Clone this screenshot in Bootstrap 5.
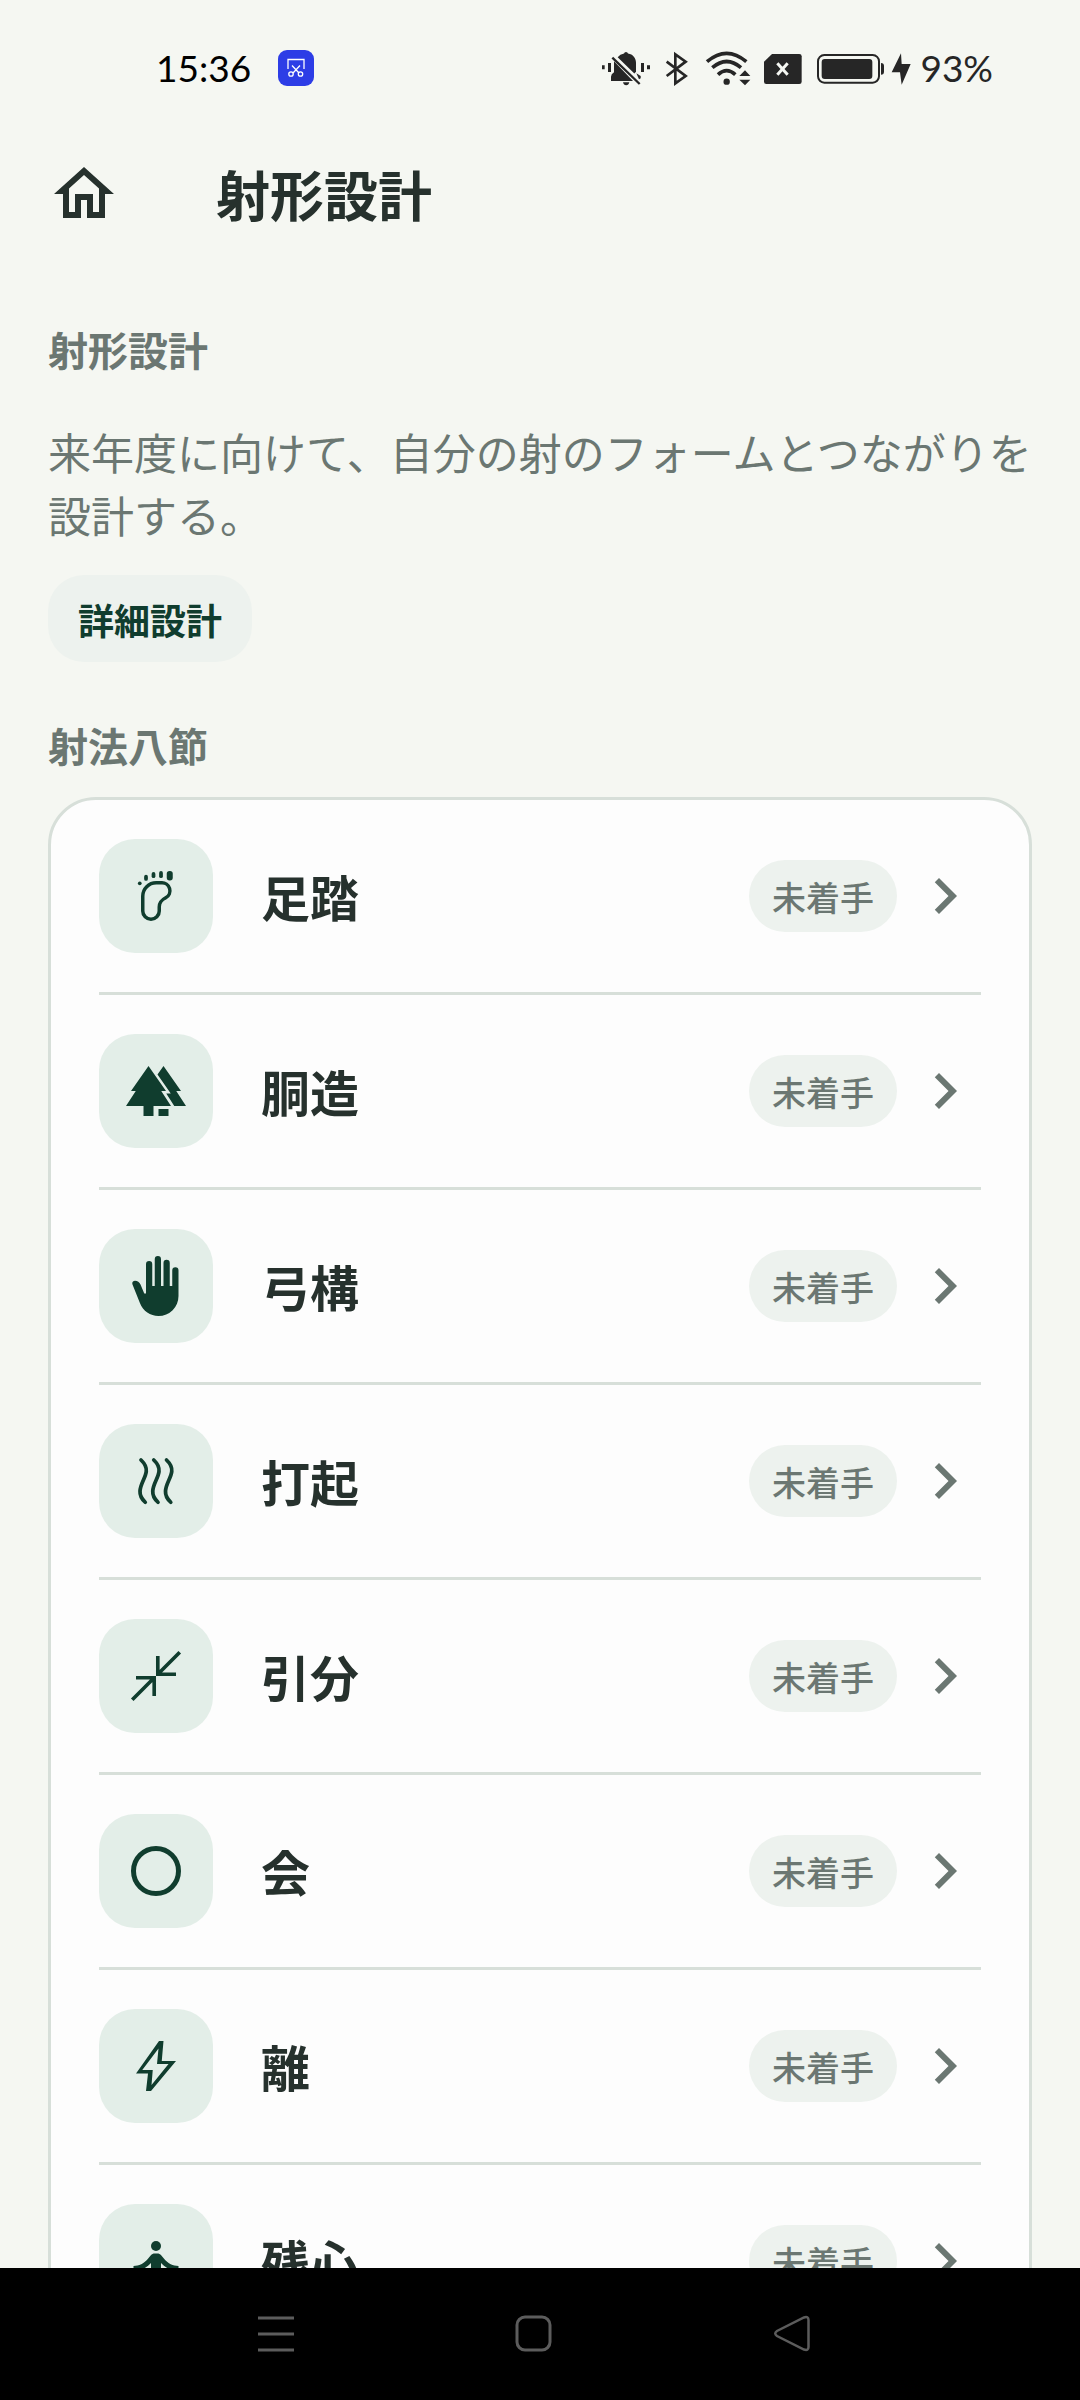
<!DOCTYPE html>
<html lang="ja">
<head>
<meta charset="utf-8">
<meta name="viewport" content="width=device-width, initial-scale=1">
<title>射形設計</title>
<link href="https://cdn.jsdelivr.net/npm/bootstrap@5.3.0/dist/css/bootstrap.min.css" rel="stylesheet">
<style>
  :root { --ink: #26312d; --muted: #6b7772; --pine: #103d2e; --line: #d7dfd9; --mist: #edf2ee; }
  body { background: #f5f7f2; color: var(--ink); font-family: "Noto Sans CJK JP", sans-serif; }
  svg { display: block; flex: none; }
  .status-bar { height: 96px; padding: 40px 87px 0 156px; font-family: Lato, sans-serif; font-size: 37px; line-height: 56px; color: #262626; }
  .clock { color: #000; margin-right: 27px; }
  .status-icons { gap: 12px; }
  .app-bar { padding: 62px 48px 0; gap: 96px; }
  .app-title { font-size: 54px; line-height: 72px; font-weight: 700; }
  .content { padding: 89px 48px 0; scrollbar-width: none; min-height: 0; }
  .section-title { font-size: 40px; line-height: 60px; font-weight: 700; color: var(--muted); }
  .intro { font-size: 43px; line-height: 63px; color: var(--muted); margin: 41px -12px 29px 0; }
  .btn-detail { --bs-btn-bg: #edf2ee; --bs-btn-color: #103d2e; --bs-btn-hover-bg: #e2ede7; --bs-btn-hover-color: #103d2e; padding: 16px 30px 14px; font-size: 36px; line-height: 57px; font-weight: 700; border: 0; border-radius: 36px; margin-bottom: 53px; }
  .steps { background: #fdfdfd; border: 3px solid var(--line); border-radius: 48px; padding: 0 48px; margin-top: 22px; }
  .step { padding: 39px 0; color: var(--ink); border-bottom: 3px solid var(--line); }
  .step:last-child { border-bottom: 0; }
  .step-icon { width: 114px; height: 114px; border-radius: 36px; background: #e3eee8; color: var(--pine); margin-right: 48px; }
  .step-name { font-size: 49px; line-height: 72px; font-weight: 700; }
  .step-state { font-size: 34px; line-height: 48px; padding: 13px 23px 11px; font-weight: 500; background: var(--mist); color: var(--muted); margin-right: 12px; }
  .chevron { color: var(--muted); }
  .system-nav { background: #000; height: 132px; padding: 0 258px 0 246px; }
  .system-nav button { width: 60px; height: 60px; color: #5c5c5c; }
</style>
<script src="https://cdn.jsdelivr.net/npm/bootstrap@5.3.0/dist/js/bootstrap.bundle.min.js"></script>
</head>
<body class="d-flex flex-column vh-100 overflow-hidden">

<svg class="d-none" aria-hidden="true">
  <symbol id="chevron" viewBox="0 0 24 24"><path d="M10 6 8.59 7.41 13.17 12l-4.58 4.59L10 18l6-6z"/></symbol>
</svg>

<div class="status-bar d-flex align-items-center flex-shrink-0">
  <span class="clock">15:36</span>
  <svg class="me-auto" width="36" height="36" viewBox="0 0 36 36"><rect width="36" height="36" rx="9" fill="#2d3de6"/><g fill="none" stroke="#fff" stroke-width="1.3"><path d="M10 19V9.500h16V19M14 15.500l7 7.500M22 15.500l-7 7.500"/><circle cx="13" cy="24" r="2.200"/><circle cx="22.500" cy="24" r="2.200"/></g></svg>
  <div class="status-icons d-flex align-items-center">
    <svg width="50" height="36" viewBox="30 60 150 108" fill="#262626"><path d="M33 106h8v12h-8zM51 99h9v27h-9zM150 99h9v27h-9zM168 106h9v12h-9zM96 157h19q-2 9-9.500 9t-9.500-9zM80 82q7-10 19-11.500 1-4.500 6-4.500t6 4.500c15 2 24 14 24 28v27l-5 5zM69 94l57 59H60v-13q0-8 9-13z"/><path d="M136 130l13 8v7l-5 3z"/><path d="M64 83l82 79" stroke="#262626" stroke-width="7"/></svg>
    <svg width="27" height="36" viewBox="216 60 81 108" fill="none" stroke="#262626" stroke-width="8"><path d="m227 95 57 43-31 22V73l31 22-57 43"/></svg>
    <svg width="49" height="36" viewBox="333 60 147 108" fill="none" stroke="#262626" stroke-width="11"><path d="M348 95q59-50 118 0M364 113q43-37 86 0M381 134q26-24 52 0"/><circle cx="407" cy="155" r="9.500" fill="#262626" stroke="none"/><path d="m445 138 17-17 16 17zM445 149h33l-16 17z" fill="#262626" stroke="none"/></svg>
    <svg width="40" height="36" viewBox="516 60 120 108"><path d="M543 72h82q7 0 7 7v76q0 7-7 7h-99q-7 0-7-7V95z" fill="#262626"/><path d="m559 100 31 34m0-34-31 34" stroke="#f5f7f2" stroke-width="9"/></svg>
    <div class="d-flex align-items-center gap-1">
      <svg width="71" height="36" viewBox="672 60 213 108"><rect x="681" y="75" width="183" height="83" rx="19" fill="none" stroke="#262626" stroke-width="6"/><rect x="692" y="87" width="152" height="60" rx="9" fill="#262626"/><path d="M870 99q9 0 9 9v17q0 9-9 9z" fill="#262626"/></svg>
      <svg width="22" height="36" viewBox="897 60 66 108"><path d="m930 70-28 57h25l5 37 27-62h-27z" fill="#262626"/></svg>
      <span class="ps-1">93%</span>
    </div>
  </div>
</div>

<header class="app-bar d-flex align-items-center flex-shrink-0">
  <a href="#" class="d-block" aria-label="ホーム"><svg width="72" height="72" viewBox="0 0 24 24" fill="#26312d"><path d="m12 5.690 5 4.500V18h-2v-6H9v6H7v-7.810l5-4.500M12 3 2 12h3v8h6v-6h2v6h6v-8h3z"/></svg></a>
  <h1 class="app-title mb-0">射形設計</h1>
</header>

<main class="content flex-grow-1 overflow-auto">
  <h2 class="section-title mb-0">射形設計</h2>
  <p class="intro">来年度に向けて、自分の射のフォームとつながりを設計する。</p>
  <button type="button" class="btn btn-detail d-block">詳細設計</button>

  <h2 class="section-title mb-0">射法八節</h2>
  <nav class="steps" aria-label="射法八節">
    <a href="#" class="step d-flex align-items-center text-decoration-none">
      <span class="step-icon d-flex align-items-center justify-content-center"><svg width="60" height="60" viewBox="0 0 24 24" fill="currentColor"><path d="M6.700 12.100a5.400 5.400 0 0 1 5.400-5.400h2a3.200 3.200 0 0 1 1.800 6c-1.700.9-2.600 1.700-2.600 3.700V18a3.300 3.300 0 0 1-6.600 0z" fill="none" stroke="currentColor" stroke-width="1.400"/><circle cx="5.500" cy="6.900" r=".75"/><rect x="7.250" y="3.500" width="1.500" height="2.400" rx=".75"/><rect x="10.250" y="2.400" width="1.500" height="2.400" rx=".75"/><rect x="13.250" y="2" width="1.500" height="2.800" rx=".75"/><rect x="16.300" y="2" width="2.400" height="3.800" rx="1.100"/></svg></span>
      <span class="step-name flex-grow-1">足踏</span><span class="step-state rounded-pill">未着手</span><svg class="chevron" width="72" height="72" fill="currentColor"><use href="#chevron"/></svg>
    </a>
    <a href="#" class="step d-flex align-items-center text-decoration-none">
      <span class="step-icon d-flex align-items-center justify-content-center"><svg width="60" height="60" viewBox="0 0 24 24" fill="currentColor"><path d="m9 2 7 10h-1.900L18 18h-7v4H7v-4H0l3.900-6H2zM15 2l7 10h-1.900l3.900 6h-4.700l-3.200-5h1.800L12.600 5.400zM13 19.200h4V22h-4z"/></svg></span>
      <span class="step-name flex-grow-1">胴造</span><span class="step-state rounded-pill">未着手</span><svg class="chevron" width="72" height="72" fill="currentColor"><use href="#chevron"/></svg>
    </a>
    <a href="#" class="step d-flex align-items-center text-decoration-none">
      <span class="step-icon d-flex align-items-center justify-content-center"><svg width="60" height="60" viewBox="0 0 24 24" fill="currentColor"><path d="M21 5.750V16a8 8 0 0 1-8 8c-3.300 0-6.200-2-7.400-5.100l-3-7.500c-.3-.8.2-1.500 1-1.500 1 0 1.800.6 2.200 1.500L7.300 15H8V3.250a1.250 1.250 0 0 1 2.500 0V12h1V1.250a1.250 1.250 0 0 1 2.500 0V12h1V2.750a1.250 1.250 0 0 1 2.500 0V12h1V5.750a1.250 1.250 0 0 1 2.500 0z"/></svg></span>
      <span class="step-name flex-grow-1">弓構</span><span class="step-state rounded-pill">未着手</span><svg class="chevron" width="72" height="72" fill="currentColor"><use href="#chevron"/></svg>
    </a>
    <a href="#" class="step d-flex align-items-center text-decoration-none">
      <span class="step-icon d-flex align-items-center justify-content-center"><svg width="60" height="60" viewBox="0 0 24 24" fill="none" stroke="currentColor" stroke-width="1.500" stroke-linecap="round"><path d="M6 3.600c1.500 1.400 2.300 2.800 2.100 4.600-.3 2.600-2.300 4.800-2.500 7.800-.1 1.800.7 3.200 2.100 4.500M11.100 3.600c1.500 1.400 2.300 2.800 2.100 4.600-.3 2.600-2.300 4.800-2.500 7.800-.1 1.800.7 3.200 2.100 4.500M16.200 3.600c1.500 1.400 2.300 2.800 2.100 4.600-.3 2.600-2.300 4.800-2.500 7.800-.1 1.800.7 3.200 2.100 4.500"/></svg></span>
      <span class="step-name flex-grow-1">打起</span><span class="step-state rounded-pill">未着手</span><svg class="chevron" width="72" height="72" fill="currentColor"><use href="#chevron"/></svg>
    </a>
    <a href="#" class="step d-flex align-items-center text-decoration-none">
      <span class="step-icon d-flex align-items-center justify-content-center"><svg width="60" height="60" viewBox="0 0 24 24" fill="none" stroke="currentColor" stroke-width="1.450"><path d="M12.720 4v7.280H20M12.720 11.280l8.780-8.780M11.280 20v-7.280H4M11.280 12.720 2.500 21.500"/></svg></span>
      <span class="step-name flex-grow-1">引分</span><span class="step-state rounded-pill">未着手</span><svg class="chevron" width="72" height="72" fill="currentColor"><use href="#chevron"/></svg>
    </a>
    <a href="#" class="step d-flex align-items-center text-decoration-none">
      <span class="step-icon d-flex align-items-center justify-content-center"><svg width="60" height="60" viewBox="0 0 24 24" fill="none" stroke="currentColor" stroke-width="2"><circle cx="12" cy="12" r="9"/></svg></span>
      <span class="step-name flex-grow-1">会</span><span class="step-state rounded-pill">未着手</span><svg class="chevron" width="72" height="72" fill="currentColor"><use href="#chevron"/></svg>
    </a>
    <a href="#" class="step d-flex align-items-center text-decoration-none">
      <span class="step-icon d-flex align-items-center justify-content-center"><svg width="60" height="60" viewBox="0 0 24 24" fill="currentColor" fill-rule="evenodd"><path d="M13.200 2H15l-.7 8H20L10 22H8l.8-7H4zM13 5 6.500 13.600h4.200l-.5 6L17 11.200h-4.600z"/></svg></span>
      <span class="step-name flex-grow-1">離</span><span class="step-state rounded-pill">未着手</span><svg class="chevron" width="72" height="72" fill="currentColor"><use href="#chevron"/></svg>
    </a>
    <a href="#" class="step d-flex align-items-center text-decoration-none">
      <span class="step-icon d-flex align-items-center justify-content-center"><svg width="60" height="60" viewBox="0 0 24 24" fill="currentColor"><circle cx="12" cy="6" r="2"/><path d="M21 16v-2c-2.240 0-4.160-.96-5.600-2.680l-1.340-1.600C13.680 9.260 13.120 9 12.530 9h-1.050c-.6 0-1.150.26-1.530.72l-1.340 1.600C7.160 13.040 5.240 14 3 14v2c2.770 0 5.190-1.170 7-3.250V15l-3.880 1.550C5.450 16.820 5 17.480 5 18.210 5 19.200 5.800 20 6.790 20H9v-.5c0-1.380 1.120-2.500 2.500-2.500h3c.28 0 .5.22.5.5s-.22.5-.5.5h-3c-.83 0-1.500.67-1.500 1.500v.5h7.100c.99 0 1.900-.81 1.900-1.790 0-.73-.45-1.390-1.120-1.660L14 15v-2.250c1.810 2.080 4.230 3.250 7 3.250z"/></svg></span>
      <span class="step-name flex-grow-1">残心</span><span class="step-state rounded-pill">未着手</span><svg class="chevron" width="72" height="72" fill="currentColor"><use href="#chevron"/></svg>
    </a>
  </nav>
</main>

<div class="system-nav d-flex align-items-center justify-content-between flex-shrink-0">
  <button type="button" class="btn p-0 border-0" aria-label="最近使ったアプリ"><svg width="60" height="60" viewBox="0 0 60 60" stroke="currentColor" stroke-width="3"><path d="M12 14h36M12 30h36M12 46h36"/></svg></button>
  <button type="button" class="btn p-0 border-0" aria-label="ホーム画面"><svg width="60" height="60" viewBox="0 0 60 60" fill="none" stroke="currentColor" stroke-width="3"><rect x="13" y="13" width="33" height="33" rx="8"/></svg></button>
  <button type="button" class="btn p-0 border-0" aria-label="戻る"><svg width="60" height="60" viewBox="0 0 60 60" fill="none" stroke="currentColor" stroke-width="2.500"><path d="M42 13.500q4.500-1.500 4.500 2.500v27q0 4-4.500 2.500L15 32q-3.500-2.500 0-5z"/></svg></button>
</div>
</body>
</html>
